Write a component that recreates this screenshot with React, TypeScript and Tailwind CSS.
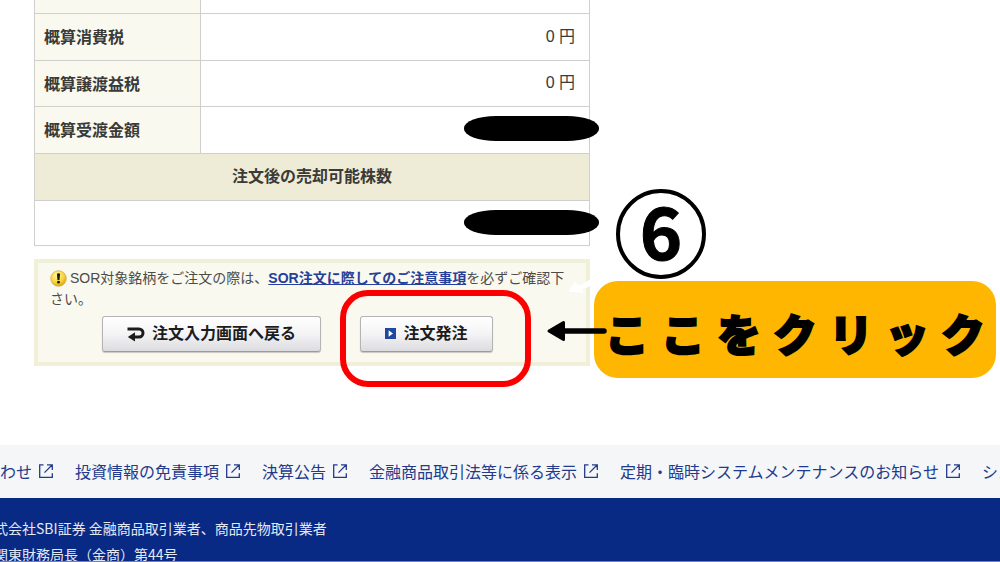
import React from "react";

const feeRows = [
  { label: "概算消費税", value: "0 円", height: "h-[47px]" },
  { label: "概算譲渡益税", value: "0 円", height: "h-[46px]" },
  { label: "概算受渡金額", value: null, height: "h-[47px]" },
];

const footerLinks = [
  "わせ",
  "投資情報の免責事項",
  "決算公告",
  "金融商品取引法等に係る表示",
  "定期・臨時システムメンテナンスのお知らせ",
  "システム",
];

function Redaction() {
  return (
    <span
      aria-hidden="true"
      className="absolute -right-2.5 top-[9px] h-[25px] w-[135px] rounded-[32px/12px] bg-black"
    />
  );
}

function ExternalIcon() {
  return (
    <svg
      aria-hidden="true"
      viewBox="0 0 16 16"
      className="size-4 shrink-0"
      fill="none"
      stroke="currentColor"
      strokeWidth="1.3"
    >
      <path d="M5.5 1.8H1.7v12.5h12.6v-4M9 1.8h5.3v5.3M14.3 1.8 6.5 9.6" />
    </svg>
  );
}

function WarningIcon() {
  return (
    <svg aria-hidden="true" viewBox="0 0 17 17" className="mr-[3px] inline-block size-[17px] align-[-4px]">
      <defs>
        <radialGradient id="warn" cx="0.4" cy="0.3" r="0.75">
          <stop offset="0" stopColor="#fff7a0" />
          <stop offset="0.6" stopColor="#f7d438" />
          <stop offset="1" stopColor="#d99c14" />
        </radialGradient>
      </defs>
      <circle cx="8.5" cy="8.5" r="7.8" fill="url(#warn)" stroke="#cfa54a" strokeWidth="0.7" />
      <path d="M6.9 3.8q1.6-1 3.2 0L9.5 10h-2z" fill="#221a05" />
      <circle cx="8.5" cy="12.2" r="1.4" fill="#221a05" />
    </svg>
  );
}

function OrderTable() {
  return (
    <table className="w-full table-fixed border-collapse text-base leading-6 text-[#3a3a38]">
      <colgroup>
        <col className="w-[166px]" />
        <col />
      </colgroup>
      <tbody>
        <tr className="h-[13px]">
          <th className="border border-t-0 border-[#cfcfcb] bg-[#f9f9ef] p-0" />
          <td className="border border-t-0 border-[#cfcfcb] p-0" />
        </tr>
        {feeRows.map((row) => (
          <tr key={row.label} className={row.height}>
            <th
              scope="row"
              className="border border-[#cfcfcb] bg-[#f9f9ef] px-[9px] pt-[3px] pb-0 text-left font-bold"
            >
              {row.label}
            </th>
            <td className="relative border border-[#cfcfcb] px-[14px] py-0 text-right">
              {row.value ?? <Redaction />}
            </td>
          </tr>
        ))}
        <tr className="h-[47px]">
          <th scope="col" colSpan={2} className="border border-[#cfcfcb] bg-[#eeecd6] p-0 text-center font-bold">
            注文後の売却可能株数
          </th>
        </tr>
        <tr className="h-[45px]">
          <td colSpan={2} className="relative border border-[#cfcfcb] p-0">
            <Redaction />
          </td>
        </tr>
      </tbody>
    </table>
  );
}

const buttonStyle =
  "flex h-9 items-center justify-center gap-[7px] rounded-[3px] border border-[#b4b4b4] border-b-[#9c9c9c] bg-linear-to-b from-white via-[#f4f4f6] to-[#dcdce0] text-base font-bold text-[#1c1c1c] shadow-[0_1px_1px_#0003]";

function Notice() {
  return (
    <section className="relative mt-[13px] border-4 border-[#f0f0d8] bg-[#f9f9ef] px-3 pt-[5px] pb-2.5">
      <p className="text-sm leading-[21px] text-[#4c4c4a]">
        <WarningIcon />
        SOR対象銘柄をご注文の際は、
        <a href="#notice" className="font-bold text-[#27409c] underline">
          SOR注文に際してのご注意事項
        </a>
        を必ずご確認下さい。
      </p>
      <div className="mt-[6px] flex gap-[39px] pl-[52px]">
        <button type="button" className={`${buttonStyle} w-[219px]`}>
          <svg aria-hidden="true" viewBox="0 0 18 16" className="h-4 w-[18px]" fill="none">
            <path d="M.5 3h11.500a4 4 0 0 1 0 8H7" stroke="#1c1c1c" strokeWidth="3" />
            <path d="M8 6.200v9.400L.8 11z" fill="#1c1c1c" />
          </svg>
          注文入力画面へ戻る
        </button>
        <button type="button" className={`${buttonStyle} w-[133px]`}>
          <svg aria-hidden="true" viewBox="0 0 11 11" className="size-[11px]">
            <path d="M0 0h11v11H0z" fill="#1f48a0" />
            <path d="M3.6 2.2 8 5.5 3.6 8.8z" fill="#fff" />
          </svg>
          注文発注
        </button>
      </div>
      <span
        aria-hidden="true"
        className="absolute top-[27px] left-[302px] h-[97px] w-[191px] rounded-[28px] border-[6px] border-[#fb0000]"
      />
    </section>
  );
}

function Callout() {
  return (
    <aside className="absolute top-[189px] left-[546px] w-[450px]">
      <div className="ml-[70px] flex size-[90px] items-center justify-center rounded-full border-4 border-black bg-white text-[72px] leading-none font-bold text-black [-webkit-text-stroke:1px_black]">
        <span className="pb-2.5">6</span>
      </div>
      <div className="mt-0.5 ml-12 flex h-[97px] items-center justify-center rounded-[24px] bg-[#ffb600] pt-1.5 text-[44px] leading-none font-black whitespace-nowrap text-black [-webkit-text-stroke:2px_black]">
        <p>
          {Array.from("ここをクリック").map((char, index) => (
            <span key={index} className="px-1.5">
              {char}
            </span>
          ))}
        </p>
      </div>
      <svg aria-hidden="true" viewBox="0 0 64 72" className="absolute top-[85px] left-0 h-[72px] w-16">
        <path d="M22 17.500 29 7.500l4 4.500L46 4v7l-10 5 2 3z" fill="#fff" />
        <path d="M17 57h41" stroke="#000" strokeWidth="5.5" strokeLinecap="round" />
        <path d="M3 57 17.5 48.500v17z" fill="#000" stroke="#000" strokeWidth="3" strokeLinejoin="round" />
      </svg>
    </aside>
  );
}

export default function App() {
  return (
    <div className="relative overflow-hidden bg-white font-['Liberation_Sans','Noto_Sans_CJK_JP',sans-serif]">
      <main className="ml-[34px] max-w-[556px]">
        <OrderTable />
        <Notice />
      </main>
      <div className="font-['Noto_Sans_CJK_JP',sans-serif]">
        <Callout />
        <nav className="mt-[79px] flex h-[53px] items-center gap-[21px] overflow-hidden bg-[#f4f6f8] text-base whitespace-nowrap text-[#233a8c]">
          {footerLinks.map((label) => (
            <a key={label} href="#info" className="flex shrink-0 items-center gap-1.5">
              {label}
              <ExternalIcon />
            </a>
          ))}
        </nav>
        <footer className="h-16 overflow-hidden border-b border-[#6d80bb] bg-[#082984] pt-[17px] text-sm leading-[26px] whitespace-nowrap text-[#e4e8f4]">
          <p className="-ml-5">株式会社SBI証券 金融商品取引業者、商品先物取引業者</p>
          <p className="-ml-1.5">関東財務局長（金商）第44号</p>
        </footer>
      </div>
    </div>
  );
}
